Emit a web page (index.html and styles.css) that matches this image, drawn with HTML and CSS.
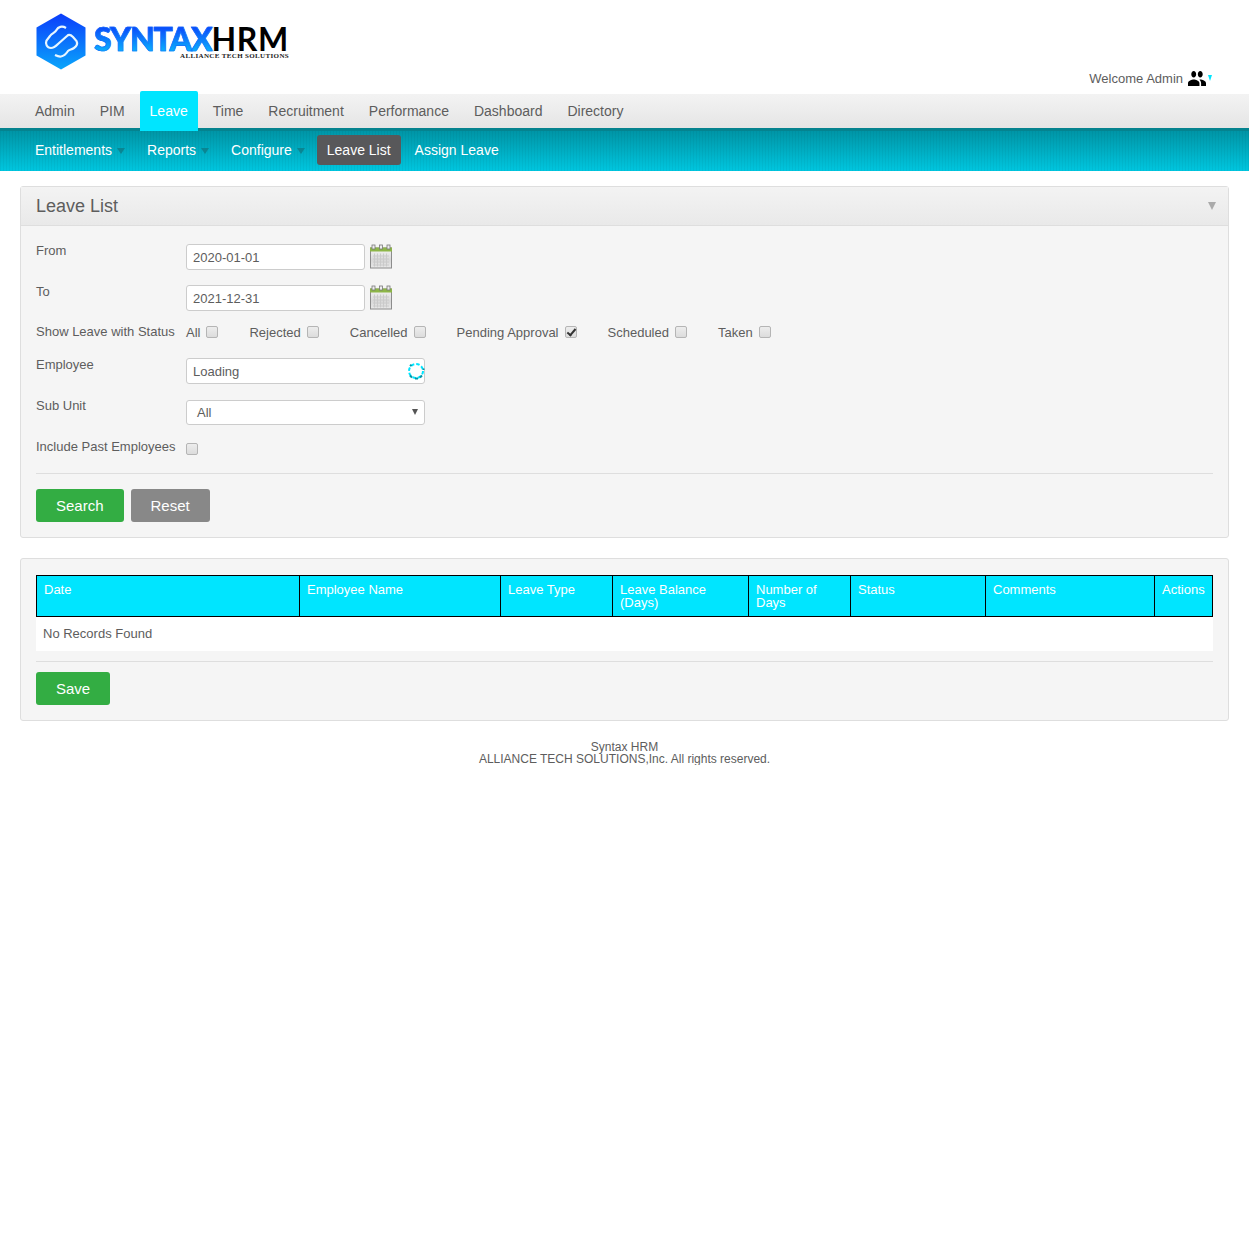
FILE: index.html
```html
<!DOCTYPE html>
<html>

<head>
    <meta charset="utf-8">
    <title>Leave List</title>
    <link rel="stylesheet" href="styles.css">
</head>

<body>
    <svg class="defs" width="0" height="0">
        <defs>
            <linearGradient id="hexFill" x1="0" y1="0" x2="0" y2="1">
                <stop offset="0" stop-color="#0b3dfb" />
                <stop offset="1" stop-color="#0aa6fb" />
            </linearGradient>
            <linearGradient id="calBody" x1="0" y1="0" x2="0" y2="1">
                <stop offset="0" stop-color="#f5f5f5" />
                <stop offset="0.6" stop-color="#d8d8d8" />
                <stop offset="1" stop-color="#e8e8e8" />
            </linearGradient>
            <symbol id="calendar" viewBox="0 0 22 24">
                <rect x="0.5" y="3.500" width="21" height="20" fill="url(#calBody)" stroke="#8c8c8c" />
                <rect x="0" y="3" width="22" height="4" fill="#8db648" />
                <rect x="2" y="0.5" width="3" height="4" fill="#eee" stroke="#777" stroke-width="0.8" />
                <rect x="9.5" y="0.5" width="3" height="4" fill="#eee" stroke="#777" stroke-width="0.8" />
                <rect x="17" y="0.5" width="3" height="4" fill="#eee" stroke="#777" stroke-width="0.8" />
                <path d="M4.500 9v13M7.500 9v13M10.500 9v13M13.500 9v13M16.500 9v13M3 11.500h16M3 14.500h16M3 17.500h16M3 20.500h16" stroke="#cacaca" stroke-width="1" />
            </symbol>
        </defs>
    </svg>

    <div class="header">
        <div class="logo">
            <svg class="logo-hex" width="50" height="57" viewBox="0 0 50 57">
                <path d="M25 0.500 49.500 14.500V42.500L25 56.500 0.500 42.500V14.500Z" fill="url(#hexFill)" />
                <path d="M30 15C26 12.500 22 14 20.500 17 19 20 16 20 14 23L10.500 27.500C9 31 11 35 15 35 18 35 20 33 22 31L31 23C33 21 35 22 37 24L40.500 28C42 31 41 33 38 35 35 37 34 36 32 38 30 41 28 43 25 43.500 23 44 21 43 19 42" fill="none" stroke="#e8f6ff" stroke-width="2.200" />
            </svg>
            <div class="logo-text">
                <div class="logo-name"><span class="logo-syntax">SYNTAX</span><span class="logo-hrm">HRM</span></div>
                <div class="logo-tag">ALLIANCE TECH SOLUTIONS</div>
            </div>
        </div>
        <div class="welcome">
            <span>Welcome Admin</span>
            <svg width="18" height="15" viewBox="1 5 22 14" preserveAspectRatio="none">
                <path d="M16 11c1.660 0 2.990-1.340 2.990-3S17.660 5 16 5c-1.660 0-3 1.340-3 3s1.340 3 3 3zm-8 0c1.660 0 2.990-1.340 2.990-3S9.660 5 8 5C6.340 5 5 6.340 5 8s1.340 3 3 3zm0 2c-2.330 0-7 1.170-7 3.500V19h14v-2.500c0-2.330-4.670-3.500-7-3.500zm8 0c-.290 0-.620.020-.970.050 1.160.840 1.970 1.970 1.970 3.450V19h6v-2.500c0-2.330-4.670-3.500-7-3.500z" fill="#000" />
            </svg>
            <span class="welcome-arrow"></span>
        </div>
    </div>

    <ul class="main-menu">
        <li>Admin</li>
        <li>PIM</li>
        <li class="current">Leave</li>
        <li>Time</li>
        <li>Recruitment</li>
        <li>Performance</li>
        <li>Dashboard</li>
        <li>Directory</li>
    </ul>

    <ul class="sub-menu">
        <li class="drop">Entitlements<span class="sub-arrow"></span></li>
        <li class="drop">Reports<span class="sub-arrow"></span></li>
        <li class="drop">Configure<span class="sub-arrow"></span></li>
        <li class="current">Leave List</li>
        <li>Assign Leave</li>
    </ul>

    <div class="content">
        <div class="box">
            <div class="box-head">
                <h1>Leave List</h1>
                <span class="head-arrow"></span>
            </div>
            <form class="box-body">
                <div class="row row-input">
                    <label>From</label>
                    <input class="field field-date" type="text" value="2020-01-01">
                    <svg class="cal" width="22" height="25"><use href="#calendar" /></svg>
                </div>
                <div class="row row-input">
                    <label>To</label>
                    <input class="field field-date" type="text" value="2021-12-31">
                    <svg class="cal" width="22" height="25"><use href="#calendar" /></svg>
                </div>
                <div class="row row-status">
                    <label>Show Leave with Status</label>
                    <div class="status-list">
                        <span class="status">All<input type="checkbox"></span>
                        <span class="status">Rejected<input type="checkbox"></span>
                        <span class="status">Cancelled<input type="checkbox"></span>
                        <span class="status">Pending Approval<input type="checkbox" checked></span>
                        <span class="status">Scheduled<input type="checkbox"></span>
                        <span class="status">Taken<input type="checkbox"></span>
                    </div>
                </div>
                <div class="row row-input row-employee">
                    <label>Employee</label>
                    <div class="field-wrap">
                        <input class="field field-wide" type="text" value="Loading">
                        <svg class="spinner" width="18" height="18" viewBox="0 0 18 18">
                            <circle cx="9" cy="9" r="7" fill="none" stroke="#00e5ff" stroke-width="2" stroke-dasharray="3.500 2" />
                            <path d="M3 13.500 5 15.500M8 16.500h3M13 15.500 15 13.500M16.500 8v-1.500M3 4 4.500 2.800" stroke="#0096a8" stroke-width="2" fill="none" />
                        </svg>
                    </div>
                </div>
                <div class="row row-select">
                    <label>Sub Unit</label>
                    <div class="select">All<span class="select-arrow"></span></div>
                </div>
                <div class="row row-past">
                    <label>Include Past Employees</label>
                    <input type="checkbox">
                </div>
                <hr>
                <div class="buttons">
                    <button class="btn btn-green" type="button">Search</button>
                    <button class="btn btn-grey" type="button">Reset</button>
                </div>
            </form>
        </div>

        <div class="box box-results">
            <table class="results">
                <thead>
                    <tr>
                        <th class="col-date">Date</th>
                        <th class="col-name">Employee Name</th>
                        <th class="col-type">Leave Type</th>
                        <th class="col-balance">Leave Balance (Days)</th>
                        <th class="col-days">Number of Days</th>
                        <th class="col-status">Status</th>
                        <th class="col-comments">Comments</th>
                        <th class="col-actions">Actions</th>
                    </tr>
                </thead>
                <tbody>
                    <tr>
                        <td colspan="8">No Records Found</td>
                    </tr>
                </tbody>
            </table>
            <hr class="hr-results">
            <button class="btn btn-green" type="button">Save</button>
        </div>

        <div class="footer">
            <div>Syntax HRM</div>
            <div>ALLIANCE TECH SOLUTIONS,Inc. All rights reserved.</div>
        </div>
    </div>
</body>

</html>
```

FILE: styles.css
```css
html,
body {
    margin: 0;
    padding: 0;
    background: #fff;
    color: #5d5d5d;
    font-family: "Liberation Sans", Arial, sans-serif;
    font-size: 14px;
}

.defs {
    position: absolute;
}

/* header */
.header {
    height: 94px;
    display: flex;
    justify-content: space-between;
    box-sizing: border-box;
    padding: 13px 37px 0 36px;
}

.logo {
    display: flex;
}

.logo-hex {
    display: block;
}

.logo-text {
    margin-left: 8px;
    padding-top: 13px;
}

.logo-name {
    display: flex;
    height: 26px;
    line-height: 26px;
    font-family: Lato, sans-serif;
    font-size: 32px;
}

.logo-syntax {
    font-weight: 900;
    letter-spacing: -1.1px;
    background: linear-gradient(#0b45fb, #0ab4fb);
    -webkit-background-clip: text;
    background-clip: text;
    color: transparent;
    -webkit-text-stroke: 0.6px #0e6ffb;
}

.logo-hrm {
    font-weight: 700;
    letter-spacing: 0.6px;
    color: #000;
}

.logo-tag {
    margin: 0 0 0 86px;
    font-family: "Liberation Serif", serif;
    font-size: 7px;
    line-height: 8px;
    font-weight: 700;
    letter-spacing: 0.35px;
    color: #222;
    white-space: nowrap;
}

.welcome {
    display: flex;
    align-items: center;
    height: 18px;
    margin-top: 56px;
    font-size: 13px;
}

.welcome svg {
    margin-left: 5px;
}

.welcome-arrow {
    width: 0;
    height: 0;
    margin: 0 0 0 2px;
    border-left: 2.500px solid transparent;
    border-right: 2.500px solid transparent;
    border-top: 6px solid #00e5ff;
}

/* menus */
.main-menu,
.sub-menu {
    list-style-type: none;
    margin: 0;
    display: flex;
}

.main-menu {
    height: 34px;
    padding: 0 0 0 25px;
    gap: 5px;
    background: linear-gradient(#f3f3f3, #e5e5e5);
}

.main-menu>li {
    padding: 0 10px;
    line-height: 34px;
}

.main-menu>li.current {
    margin: -3px 0 -3px;
    line-height: 40px;
    background: #00e5ff;
    color: #fff;
    border-radius: 2px 2px 0 0;
}

.sub-menu {
    padding: 4px 0 0 25px;
    box-sizing: border-box;
    height: 43px;
    gap: 4px;
    color: #fff;
    border-top: 3px solid #05838f;
    background:
        repeating-linear-gradient(90deg, rgba(0, 0, 0, 0.04) 0, rgba(0, 0, 0, 0.04) 1px, transparent 1px, transparent 3px),
        linear-gradient(#0095a6, #00c6df);
}

.sub-menu>li {
    height: 30px;
    line-height: 30px;
    padding: 0 10px;
}

.sub-menu>li.drop {
    padding-right: 0;
}

.sub-menu>li.current {
    background: #58585a;
    border-radius: 3px;
}

.sub-arrow {
    display: inline-block;
    width: 0;
    height: 0;
    margin: 0 8px 0 5px;
    vertical-align: 1px;
    border-left: 4px solid transparent;
    border-right: 4px solid transparent;
    border-top: 6px solid #0a8592;
}

/* boxes */
.content {
    padding: 15px 20px 0;
}

.box {
    background: #f5f5f5;
    border: 1px solid #dedede;
    border-radius: 3px;
    font-size: 13px;
}

.box-results {
    margin-top: 20px;
    padding: 16px 15px 15px;
}

.box-head {
    display: flex;
    align-items: center;
    justify-content: space-between;
    padding: 0 12px 0 15px;
    background: linear-gradient(#f3f3f3, #e9e9e9);
    border-bottom: 1px solid #dedede;
    height: 38px;
}

.box-head h1 {
    margin: 0;
    font-size: 18px;
    font-weight: 400;
    color: #5d5d5d;
}

.head-arrow {
    width: 0;
    height: 0;
    border-left: 4px solid transparent;
    border-right: 4px solid transparent;
    border-top: 8px solid #aaa;
}

.box-body {
    padding: 18px 15px 15px;
}

.row {
    display: flex;
}

.row label {
    width: 150px;
    flex: none;
    line-height: 14px;
}

.row-input {
    height: 26px;
    margin-bottom: 15px;
}

.row-employee {
    margin-bottom: 16px;
}

.row-status {
    height: 14px;
    margin: -1px 0 19px;
    align-items: center;
}

.row-select {
    height: 25px;
    margin-bottom: 15px;
}

.row-select label {
    margin-top: -1px;
}

.row-past {
    height: 17px;
}

.field {
    box-sizing: border-box;
    height: 26px;
    margin: 0;
    padding: 0 6px;
    border: 1px solid #ccc;
    border-radius: 3px;
    background: #fff;
    color: #5d5d5d;
    font-family: "Liberation Sans", Arial, sans-serif;
    font-size: 13px;
}

.field-date {
    width: 179px;
}

.field-wide {
    width: 239px;
}

.cal {
    margin-left: 5px;
}

.field-wrap {
    position: relative;
}

.spinner {
    position: absolute;
    top: 4px;
    right: 0;
}

.status-list {
    display: flex;
    gap: 31px;
}

.status {
    display: flex;
    align-items: center;
    gap: 6px;
}

input[type="checkbox"] {
    appearance: none;
    -webkit-appearance: none;
    box-sizing: border-box;
    position: relative;
    width: 12px;
    height: 12px;
    margin: 0;
    flex: none;
    border: 1px solid #b5b5b5;
    border-radius: 2px;
    background: linear-gradient(#ededed, #dcdcdc);
}

input[type="checkbox"]:checked::after {
    content: "";
    position: absolute;
    left: 3px;
    top: 0;
    width: 3px;
    height: 7px;
    border: solid #333;
    border-width: 0 2px 2px 0;
    transform: rotate(40deg);
}

.row-past input[type="checkbox"] {
    margin-top: 3px;
}

.select {
    position: relative;
    box-sizing: border-box;
    width: 239px;
    height: 25px;
    padding-left: 10px;
    line-height: 24px;
    background: #fff;
    border: 1px solid #ccc;
    border-radius: 3px;
}

.select-arrow {
    position: absolute;
    top: 8px;
    right: 6px;
    border-left: 3px solid transparent;
    border-right: 3px solid transparent;
    border-top: 6px solid #555;
}

hr {
    height: 1px;
    margin: 16px 0 15px;
    border: 0;
    background: #dedede;
}

.hr-results {
    margin: 10px 0;
}

.buttons {
    display: flex;
    gap: 7px;
}

.btn {
    display: block;
    height: 33px;
    padding: 0 20px;
    border: 0;
    border-radius: 3px;
    color: #fff;
    font-family: "Liberation Sans", Arial, sans-serif;
    font-size: 15px;
}

.btn-green {
    background: #33ad43;
}

.btn-grey {
    background: #888;
}

/* results table */
.results {
    width: 1177px;
    table-layout: fixed;
    border-collapse: collapse;
    background: #fff;
}

.results th {
    height: 41px;
    padding: 7px 7px 0;
    box-sizing: border-box;
    vertical-align: top;
    text-align: left;
    font-weight: 400;
    line-height: 13px;
    color: #fff;
    background: #00e5ff;
    border: 1px solid #000;
}

.results td {
    height: 34px;
    padding: 0 6.500px 1px;
    box-sizing: border-box;
}

.col-date {
    width: 263px;
}

.col-name {
    width: 201px;
}

.col-type {
    width: 112px;
}

.col-balance {
    width: 136px;
}

.col-days {
    width: 102px;
}

.col-status {
    width: 135px;
}

.col-comments {
    width: 169px;
}

/* footer */
.footer {
    margin-top: 20px;
    text-align: center;
    font-size: 12px;
    line-height: 12px;
}
```
